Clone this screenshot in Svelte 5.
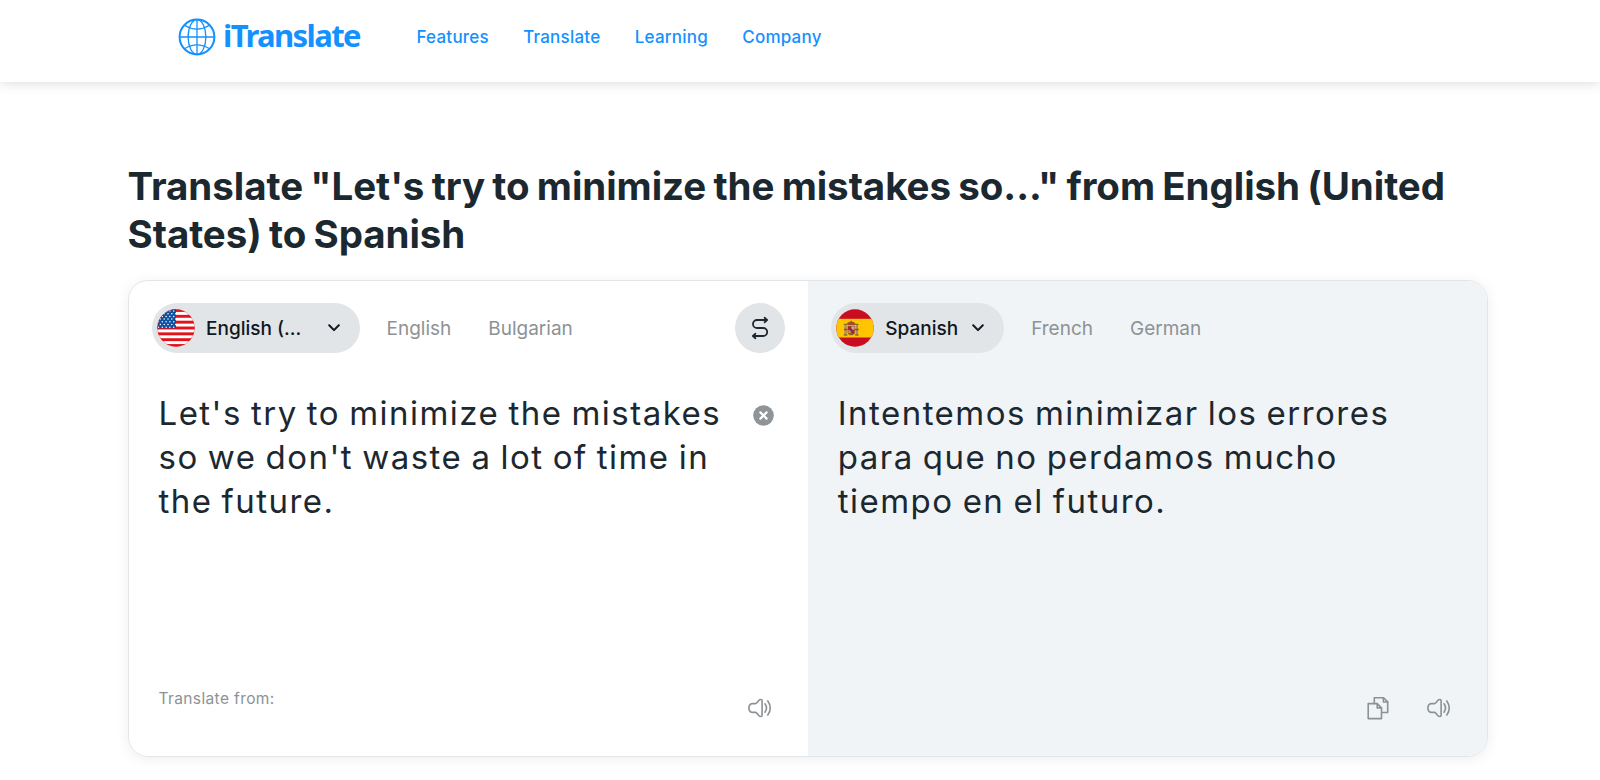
<script lang="ts">
	const nav = ['Features', 'Translate', 'Learning', 'Company'];

	const source = {
		text: "Let's try to minimize the mistakes so we don't waste a lot of time in the future.",
		recent: ['English', 'Bulgarian']
	};
	const target = {
		text: 'Intentemos minimizar los errores para que no perdamos mucho tiempo en el futuro.',
		recent: ['French', 'German']
	};

	const stripes = [0, 2, 4, 6, 8, 10, 12];
	const stars = Array.from({ length: 35 }, (_, i) => ({
		x: 1.5 + (i % 5) * 3.8 + (Math.floor(i / 5) % 2) * 1.9,
		y: 2 + Math.floor(i / 5) * 2.7
	}));
</script>

{#snippet chevron()}
	<svg class="chevron" viewBox="0 0 12 8" width="12" height="8">
		<path d="M1.2 1.3 6 6.1l4.8-4.8" />
	</svg>
{/snippet}

{#snippet speaker()}
	<button class="icon-button" aria-label="Listen">
		<svg viewBox="0 0 24 20" width="24" height="20">
			<path d="M4.2 5.6h3.2q.8 0 1.5-.8L11 2.3c.9-1 3.1-1.2 3.1.5v14.4c0 1.7-2.2 1.5-3.1.5l-2.1-2.5q-.7-.8-1.5-.8H4.2C2 14.4.9 12.3.9 10s1.1-4.4 3.3-4.4Z" />
			<path d="M17 5.8q3 4.2 0 8.4M19.8 3q4.9 7 0 14" />
		</svg>
	</button>
{/snippet}

{#snippet recents(items)}
	<div class="recents">
		{#each items as item}
			<button>{item}</button>
		{/each}
	</div>
{/snippet}

<header>
	<a class="logo" href="/">
		<svg viewBox="0 0 38 38" width="38" height="38">
			<circle cx="19" cy="19" r="17.4" stroke-width="2" />
			<path d="M19 1.5v35M1.5 19h35" />
			<ellipse cx="19" cy="19" rx="8.9" ry="17.3" />
			<path d="M6.5 7.3Q19 15 31.5 7.3M6.5 30.7Q19 23 31.5 30.7" />
		</svg>
		<span>iTranslate</span>
	</a>
	<nav>
		{#each nav as item}
			<a href="/">{item}</a>
		{/each}
	</nav>
</header>

<main>
	<h1>Translate "Let's try to minimize the mistakes so..." from English (United States) to Spanish</h1>

	<div class="card">
		<section class="pane">
			<div class="toolbar">
				<button class="language wide">
					<svg class="flag" viewBox="0 0 38 38" width="38" height="38">
						<clipPath id="round"><circle cx="19" cy="19" r="18.7" /></clipPath>
						<g clip-path="url(#round)">
							<rect width="38" height="38" fill="#fff" />
							{#each stripes as n}
								<rect y={n * 2.923} width="38" height="2.923" fill="#e3121b" />
							{/each}
							<rect width="19" height="19.2" fill="#0b51a0" />
							{#each stars as star}
								<circle cx={star.x} cy={star.y} r="0.75" fill="#fff" />
							{/each}
						</g>
						<circle cx="19" cy="19" r="18.4" fill="none" stroke="#e3121b" stroke-width=".5" opacity=".6" />
					</svg>
					<span>English (...</span>
					{@render chevron()}
				</button>
				{@render recents(source.recent)}
				<button class="swap" aria-label="Swap languages">
					<svg viewBox="0 0 18 24" width="18" height="24">
						<path d="M15.5 4H6.1C3.8 4 2 5.6 2 7.9S3.8 12 6.1 12h6c2.3 0 4.1 1.7 4.1 4s-1.8 4-4.1 4H2.5" />
						<path d="m13.6 1.8 2.5 2.2-2.5 2.2M4.4 17.8 1.9 20l2.5 2.2" />
					</svg>
				</button>
			</div>
			<div class="content">
				<p>{source.text}</p>
				<button class="clear" aria-label="Clear">
					<svg viewBox="0 0 21 21" width="21" height="21">
						<circle cx="10.5" cy="10.5" r="10.3" />
						<path d="m7.4 7.4 6.2 6.2m0-6.2-6.2 6.2" />
					</svg>
				</button>
			</div>
			<footer>
				<span class="hint">Translate from:</span>
				{@render speaker()}
			</footer>
		</section>

		<section class="pane target">
			<div class="toolbar">
				<button class="language">
					<svg class="flag" viewBox="0 0 38 38" width="38" height="38">
						<g clip-path="url(#round)">
							<rect width="38" height="38" fill="#c90c20" />
							<rect y="9.8" width="38" height="18.7" fill="#ffc500" />
							<path d="M8.4 15.5h2.3v11H8.4zM19.7 15.5H22v11h-2.3z" fill="#a98b61" />
							<path d="M7.7 26h3.7M19 26h3.7M7.8 15.3h3.5M19.1 15.3h3.5" stroke="#65643d" stroke-width="1" />
							<path d="M7.9 20.5h3.6M19 20.5h3.6" stroke="#c3352b" stroke-width="1.5" />
							<path d="M11.6 17h7.2v6.2c0 4.2-7.2 4.2-7.2 0Z" fill="#8e613f" />
							<path d="M12.1 17.4h3v3.5h-3zM15.3 21h3v3.5h-3z" fill="#b61f29" />
							<path d="M12.3 21.1h2.8v3h-2.8z" fill="#d88e1e" />
							<path d="M15.4 17.5h2.8v3h-2.8z" fill="#c7a6a1" />
							<ellipse cx="15.2" cy="21.1" rx="1.2" ry="1.5" fill="#304b83" />
							<path d="M11.7 16.3c-1.8-2.6 1-3.5 3.5-3.5s5.3.9 3.5 3.5Z" fill="#a94a24" />
							<circle cx="15.2" cy="12.8" r="1" fill="#806629" />
						</g>
					</svg>
					<span>Spanish</span>
					{@render chevron()}
				</button>
				{@render recents(target.recent)}
			</div>
			<div class="content">
				<p>{target.text}</p>
			</div>
			<footer>
				<button class="icon-button" aria-label="Copy">
					<svg viewBox="0 0 22 24" width="22" height="24">
						<path d="M1.2 7.6h9l4.3 4.3v10.7H1.2Z" />
						<path d="M10.2 7.6v4.3h4.3" />
						<path d="M7.3 7.4V1.7h9.2l4.2 4.2v10.6h-6" />
						<path d="M16.4 1.7V6h4.3" />
					</svg>
				</button>
				{@render speaker()}
			</footer>
		</section>
	</div>
</main>

<style>
	:global(body) {
		background: #fff;
		font-family: Inter, sans-serif;
		color: #1c2830;
	}

	button {
		padding: 0;
		border: 0;
		background: none;
		font: inherit;
		color: inherit;
		cursor: pointer;
	}

	svg {
		display: block;
		flex: none;
		fill: none;
	}

	header {
		display: flex;
		align-items: flex-start;
		height: 82px;
		box-sizing: border-box;
		padding: 18px 0 0 177.5px;
		background: #fff;
		box-shadow: 0 0 12px rgba(0, 0, 0, 0.17);
	}

	header a {
		color: #1391ff;
		text-decoration: none;
	}

	.logo {
		display: flex;
		align-items: center;
		width: 239px;
		height: 38px;
		gap: 7.5px;
	}

	.logo svg {
		stroke: #1391ff;
		stroke-width: 1.3;
	}

	.logo span {
		font-family: 'Noto Sans', sans-serif;
		font-size: 31px;
		font-weight: 700;
		letter-spacing: -1.6px;
		line-height: 34px;
		height: 38px;
	}

	nav {
		display: flex;
		gap: 34.3px;
		line-height: 38px;
		font-size: 17px;
		font-weight: 550;
		letter-spacing: 0.22px;
	}

	main {
		padding: 80px 112px 23px 127.5px;
	}

	h1 {
		margin: 0 0 22px;
		font-size: 38.5px;
		line-height: 48px;
		font-weight: 700;
		letter-spacing: -0.05px;
		word-spacing: -1.8px;
	}

	.card {
		display: grid;
		grid-template-columns: 1fr 1fr;
		height: 477px;
		box-sizing: border-box;
		border: 1px solid #e3e6e8;
		border-radius: 20px;
		overflow: hidden;
		box-shadow: 0 2px 14px rgba(0, 0, 0, 0.07);
	}

	.pane {
		display: flex;
		flex-direction: column;
		padding: 22px 23px 0;
	}

	.pane.target {
		background: #f0f4f7;
	}

	.toolbar {
		display: flex;
		align-items: center;
		height: 50px;
	}

	.language {
		display: flex;
		align-items: center;
		height: 50px;
		box-sizing: border-box;
		padding: 0 20px 0 5px;
		border-radius: 25px;
		background: #e1e5e8;
		color: #10171e;
		font-size: 19px;
		font-weight: 500;
	}

	.language.wide {
		width: 208px;
	}

	.language span {
		margin-left: 11.5px;
	}

	.chevron {
		margin-left: auto;
		stroke: #10171e;
		stroke-width: 2;
		stroke-linecap: round;
		stroke-linejoin: round;
	}

	.language:not(.wide) .chevron {
		margin-left: 14px;
	}

	.recents {
		display: flex;
		gap: 37px;
		margin-left: 27px;
		font-size: 19px;
		color: #8d9295;
	}

	.swap {
		display: grid;
		place-items: center;
		width: 50px;
		height: 50px;
		margin-left: auto;
		border-radius: 50%;
		background: #e1e5e8;
	}

	.swap svg {
		stroke: #1d2831;
		stroke-width: 1.8;
		stroke-linecap: round;
		stroke-linejoin: round;
	}

	.content {
		display: flex;
		justify-content: space-between;
		flex: 1;
		padding: 39px 11px 0 7px;
	}

	p {
		width: 575px;
		margin: 0;
		font-size: 33px;
		font-weight: 440;
		line-height: 43.8px;
		letter-spacing: 1.47px;
		word-spacing: -1.6px;
	}

	.clear {
		height: 21px;
		margin-top: 13px;
	}

	.clear circle {
		fill: #8e9497;
	}

	.clear path {
		stroke: #fff;
		stroke-width: 2.2;
		stroke-linecap: round;
	}

	footer {
		display: flex;
		height: 79px;
		padding: 0 13px 0 7px;
	}

	.target footer {
		justify-content: flex-end;
		gap: 38px;
	}

	.hint {
		margin-right: auto;
		font-size: 15.5px;
		line-height: 43px;
		letter-spacing: 0.38px;
		color: #8d9295;
	}

	.icon-button {
		height: 61px;
	}

	.icon-button svg {
		stroke: #8c9194;
		stroke-width: 1.6;
		stroke-linejoin: round;
		stroke-linecap: round;
	}
</style>
